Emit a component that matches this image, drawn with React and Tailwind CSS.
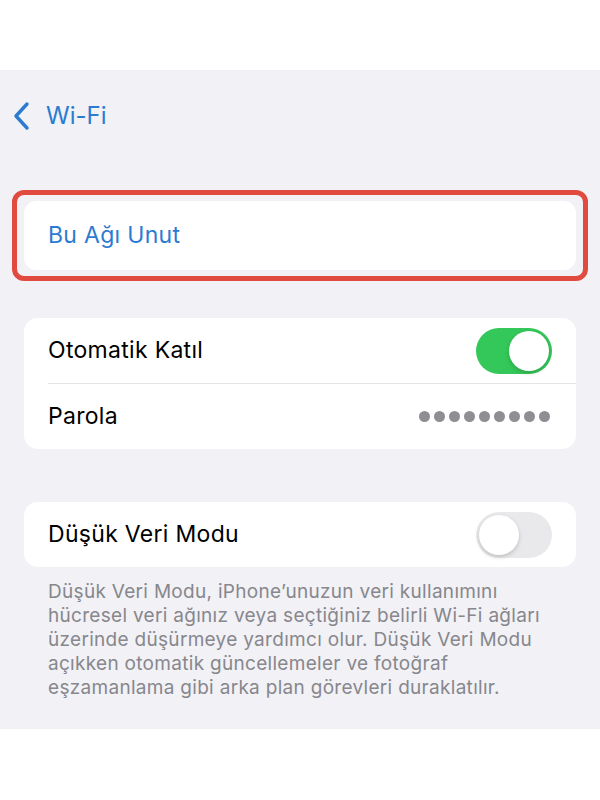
import React from "react";

const Toggle = ({ on }) => (
  <div
    className={`w-[76px] h-[46px] rounded-full p-[3px] flex items-center ${
      on ? "bg-[#34c759] justify-end" : "bg-[#e9e9eb] justify-start"
    }`}
  >
    <div className="w-[40px] h-[40px] rounded-full bg-white shadow-[0_2px_4px_rgba(0,0,0,0.18)]" />
  </div>
);

const Row = ({ label, children }) => (
  <div className="flex items-center justify-between h-[65px] pr-[24px]">
    <span className="text-[23px] tracking-[0.3px] text-black">{label}</span>
    {children}
  </div>
);

const App = () => {
  return (
    <div
      className="w-[600px] h-[800px] bg-white flex flex-col"
      style={{ fontFamily: "Inter, 'Noto Sans', sans-serif" }}
    >
      <div className="h-[70px]" />
      <div className="bg-[#f1f1f6] h-[659px] px-[24px] flex flex-col">
        {/* nav bar */}
        <div className="flex items-center gap-[14px] h-[90px] -ml-[12px] pt-[2px]">
          <svg width="20" height="30" viewBox="0 0 20 30" fill="none">
            <path
              d="M15 3 L4 15 L15 27"
              stroke="#2b7bd1"
              strokeWidth="3.4"
              strokeLinecap="round"
              strokeLinejoin="round"
            />
          </svg>
          <span className="text-[24px] text-[#2b7bd1]">Wi-Fi</span>
        </div>

        {/* highlighted forget row */}
        <div className="mt-[30px] -mx-[12px] border-[5px] border-[#e04a3f] rounded-[12px] px-[7px] py-[6px]">
          <div className="bg-white rounded-[12px] h-[69px] flex items-center pl-[24px]">
            <span className="text-[23px] tracking-[0.3px] text-[#2b7bd1]">Bu Ağı Unut</span>
          </div>
        </div>

        <div className="mt-[37px] bg-white rounded-[14px] pl-[24px]">
          <Row label="Otomatik Katıl">
            <Toggle on />
          </Row>
          <div className="h-px bg-[#e3e3e6]" />
          <Row label="Parola">
            <div className="flex gap-[4px] pr-[2px]">
              {Array.from({ length: 9 }).map((_, i) => (
                <span key={i} className="w-[11px] h-[11px] rounded-full bg-[#8e8e93]" />
              ))}
            </div>
          </Row>
        </div>

        <div className="mt-[53px] bg-white rounded-[14px] pl-[24px]">
          <Row label="Düşük Veri Modu">
            <Toggle on={false} />
          </Row>
        </div>

        <p className="mt-[13px] pl-[24px] pr-[2px] text-[19px] tracking-[0.3px] leading-[24px] text-[#87878c]">
          Düşük Veri Modu, iPhone’unuzun veri kullanımını
          <br />
          hücresel veri ağınız veya seçtiğiniz belirli Wi-Fi ağları
          <br />
          üzerinde düşürmeye yardımcı olur. Düşük Veri Modu
          <br />
          açıkken otomatik güncellemeler ve fotoğraf
          <br />
          eşzamanlama gibi arka plan görevleri duraklatılır.
        </p>
      </div>
    </div>
  );
};

export default App;
